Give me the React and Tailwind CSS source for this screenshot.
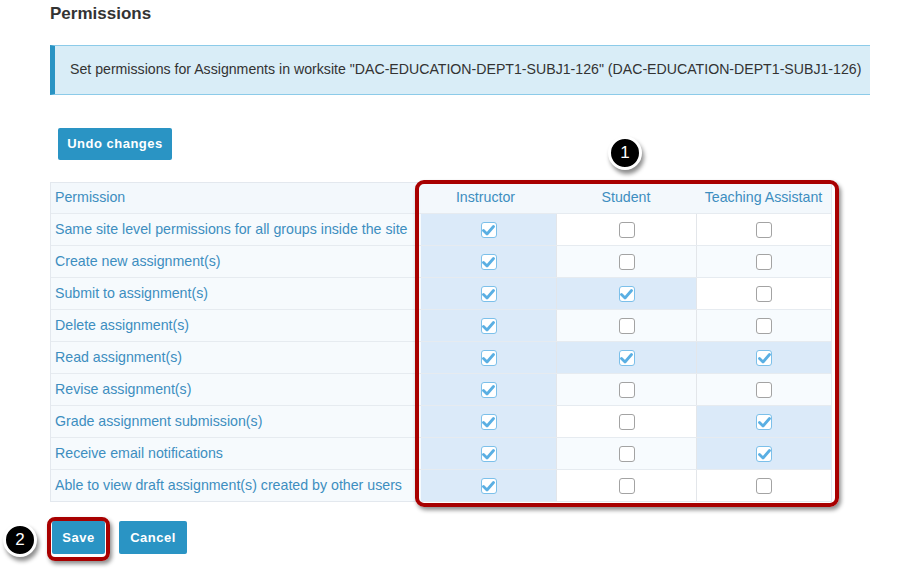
import React from "react";

const perms = [
  ["Same site level permissions for all groups inside the site", true, false, false],
  ["Create new assignment(s)", true, false, false],
  ["Submit to assignment(s)", true, true, false],
  ["Delete assignment(s)", true, false, false],
  ["Read assignment(s)", true, true, true],
  ["Revise assignment(s)", true, false, false],
  ["Grade assignment submission(s)", true, false, true],
  ["Receive email notifications", true, false, true],
  ["Able to view draft assignment(s) created by other users", true, false, false],
];

function Box({ checked }) {
  if (checked) {
    return (
      <span className="flex h-[16px] w-[16px] items-center justify-center rounded-[3px] border border-[#7cc0ea] bg-white">
        <svg width="13" height="12" viewBox="0 0 13 12">
          <path d="M1.5 6.5 L5 10 L11.5 2.5" fill="none" stroke="#5aafe3" strokeWidth="2.8" strokeLinecap="round" strokeLinejoin="round" />
        </svg>
      </span>
    );
  }
  return <span className="block h-[16px] w-[16px] rounded-[3px] border border-[#a3a3a3] bg-white" />;
}

function Badge({ n, className }) {
  return (
    <div className={"absolute flex h-[34px] w-[34px] items-center justify-center rounded-full border-[3px] border-white bg-black text-[17px] text-white shadow-[2px_4px_4px_rgba(0,0,0,0.45)] " + className}>
      {n}
    </div>
  );
}

export default function App() {
  return (
    <div className="relative h-[569px] w-[905px] overflow-hidden bg-white font-['Liberation_Sans',Arial,sans-serif] text-[#333]">
      <div className="pl-[50px] pt-[4px]">
        <h1 className="text-[17px] font-bold leading-[20px] text-[#333]">Permissions</h1>
        <div className="mt-[21px] flex h-[50px] w-[820px] items-center border-y border-[#8ccbe9] border-l-[5px] border-l-[#2a94c4] bg-[#d9edf7] pl-[15px] text-[14.15px] text-[#333]">
          Set permissions for Assignments in worksite "DAC-EDUCATION-DEPT1-SUBJ1-126" (DAC-EDUCATION-DEPT1-SUBJ1-126)
        </div>
        <button className="ml-[8px] mt-[33px] h-[32px] w-[114px] rounded-[2px] bg-[#2a94c4] text-[13px] font-bold tracking-[0.5px] text-white">
          Undo changes
        </button>
        <div className="mt-[22px] w-[782px] border border-[#e3e8ee] text-[14.2px] text-[#3d8ec0]">
          <div className="grid h-[30px] grid-cols-[370px_135px_140px_135px] items-center bg-[#f3f8fc]">
            <div className="pl-[4px]">Permission</div>
            <div className="pr-[6px] text-center">Instructor</div>
            <div className="text-center">Student</div>
            <div className="text-center">Teaching Assistant</div>
          </div>
          {perms.map((p, i) => (
            <div key={i} className={"grid h-[32px] grid-cols-[370px_135px_140px_135px] border-t border-[#e6ebf0] " + (i % 2 === 1 ? "bg-[#f7fbfe]" : "bg-white")}>
              <div className="flex items-center bg-[#f6fafd] pl-[4px]">{p[0]}</div>
              {[1, 2, 3].map((c) => (
                <div key={c} className={"flex items-center justify-center " + (c > 1 ? "border-l border-[#e3e6ea] " : "") + (p[c] ? "bg-[#dbeaf9]" : "")}>
                  <Box checked={p[c]} />
                </div>
              ))}
            </div>
          ))}
        </div>
        <div className="mt-[19px] flex gap-[14px] pl-[2px]">
          <button className="h-[33px] w-[53px] rounded-[2px] bg-[#2a94c4] text-[13px] font-bold tracking-[0.5px] text-white">Save</button>
          <button className="h-[33px] w-[68px] rounded-[2px] bg-[#2a94c4] text-[13px] font-bold tracking-[0.5px] text-white">Cancel</button>
        </div>
      </div>

      <div className="pointer-events-none absolute left-[415px] top-[180px] h-[327px] w-[424px] rounded-[9px] border-[4px] border-[#a80000] shadow-[2px_3px_4px_rgba(0,0,0,0.45)]" />
      <div className="pointer-events-none absolute left-[47px] top-[517px] h-[44px] w-[63px] rounded-[8px] border-[4px] border-[#a80000] shadow-[2px_3px_4px_rgba(0,0,0,0.45)]" />
      <Badge n="1" className="left-[608px] top-[136px]" />
      <Badge n="2" className="left-[3px] top-[523px]" />
    </div>
  );
}
